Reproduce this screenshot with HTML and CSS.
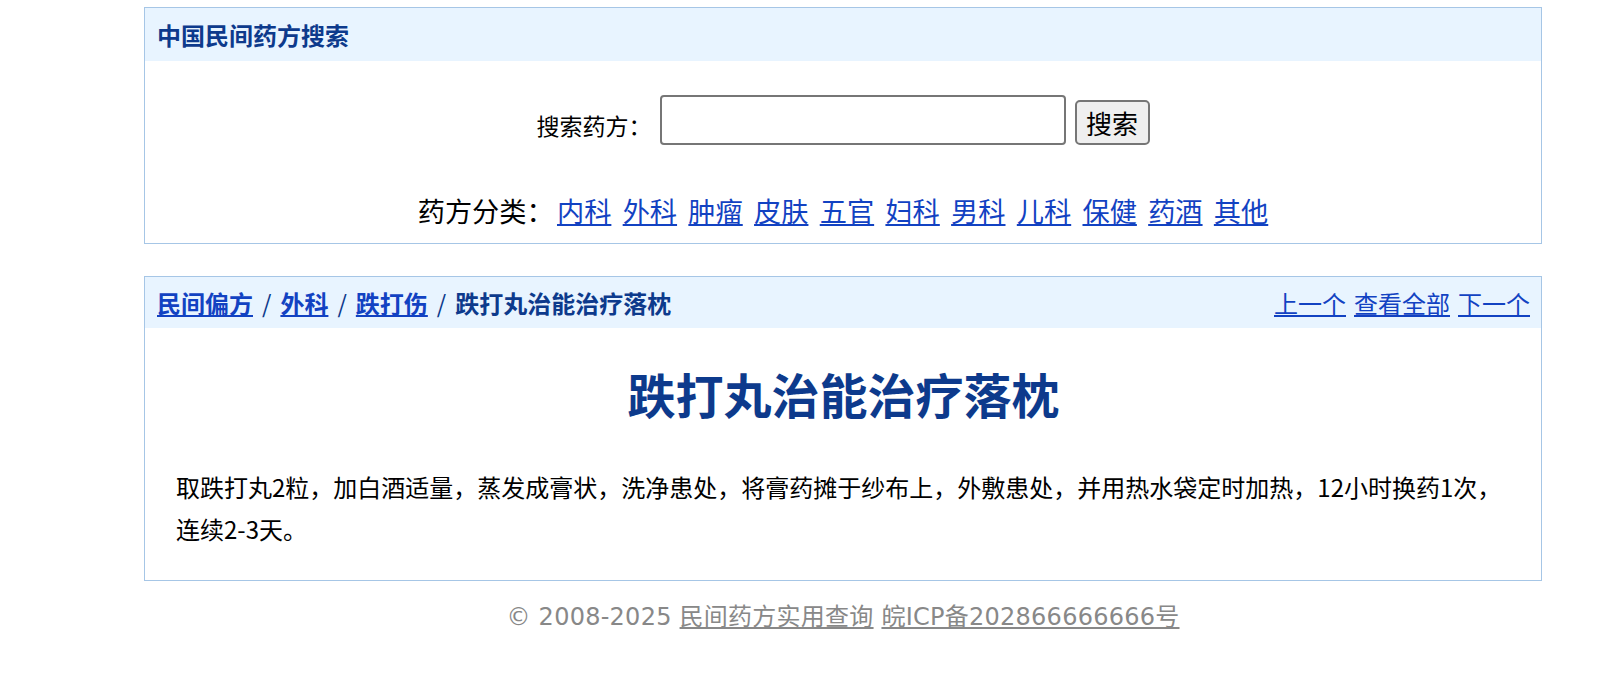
FILE: index.html
```html
<!DOCTYPE html>
<html lang="zh-CN">
<head>
<meta charset="utf-8">
<title>跌打丸治能治疗落枕</title>
<link rel="stylesheet" href="styles.css">
</head>
<body>
<div class="wrap">
  <div class="box box-search">
    <div class="box-head">中国民间药方搜索</div>
    <div class="search-body">
      <form class="search-row">
        <label class="search-label">搜索药方：</label>
        <input class="search-input" type="text">
        <button class="search-btn" type="button">搜索</button>
      </form>
      <div class="cat-row">
        <span class="cat-label">药方分类：</span>
        <a href="#">内科</a>
        <a href="#">外科</a>
        <a href="#">肿瘤</a>
        <a href="#">皮肤</a>
        <a href="#">五官</a>
        <a href="#">妇科</a>
        <a href="#">男科</a>
        <a href="#">儿科</a>
        <a href="#">保健</a>
        <a href="#">药酒</a>
        <a href="#">其他</a>
      </div>
    </div>
  </div>

  <div class="box box-article">
    <div class="box-head head-split">
      <div class="crumbs">
        <a href="#">民间偏方</a><span class="sep">/</span><a href="#">外科</a><span class="sep">/</span><a href="#">跌打伤</a><span class="sep">/</span><span class="cur">跌打丸治能治疗落枕</span>
      </div>
      <div class="pager">
        <a href="#">上一个</a>
        <a href="#">查看全部</a>
        <a href="#">下一个</a>
      </div>
    </div>
    <div class="article-body">
      <h1 class="article-title">跌打丸治能治疗落枕</h1>
      <p class="article-text">取跌打丸2粒，加白酒适量，蒸发成膏状，洗净患处，将膏药摊于纱布上，外敷患处，并用热水袋定时加热，12小时换药1次，连续2-3天。</p>
    </div>
  </div>

  <div class="footer">© 2008-2025 <a href="#">民间药方实用查询</a> <a href="#">皖ICP备202866666666号</a></div>
</div>
</body>
</html>
```

FILE: styles.css
```css
html, body {
  margin: 0;
  padding: 0;
  background: #ffffff;
}

body {
  font-family: "Noto Sans CJK SC", "Noto Sans", sans-serif;
  color: #000000;
}

.wrap {
  width: 1398px;
  margin: 0 0 0 144px;
  padding-top: 7px;
}

.box {
  border: 1px solid #a6c6e6;
  background: #ffffff;
}

.box-head {
  height: 53px;
  background: #e8f4ff;
  padding: 0 11px 0 12px;
  display: flex;
  align-items: center;
  font-size: 24px;
  font-weight: bold;
  color: #0d3a8c;
}

.search-body {
  padding-top: 34px;
  padding-bottom: 13px;
}

.search-row {
  display: flex;
  justify-content: center;
  align-items: flex-end;
  margin: 0;
}

.search-label {
  font-size: 23px;
  line-height: 23px;
  margin-bottom: 8px;
  margin-right: 8px;
}

.search-input {
  box-sizing: border-box;
  width: 406px;
  height: 50px;
  border: 2px solid #767676;
  border-radius: 4px;
  margin: 0 9px 0 0;
  padding: 0 6px;
  font-size: 22px;
}

.search-btn {
  box-sizing: border-box;
  width: 75px;
  height: 45px;
  border: 2px solid #767676;
  border-radius: 5px;
  background: #efefef;
  font-family: "Noto Sans CJK SC", sans-serif;
  font-size: 26px;
  line-height: 1;
  padding: 0;
  color: #000;
}

.cat-row {
  margin-top: 45px;
  display: flex;
  justify-content: center;
  align-items: baseline;
  gap: 11.3px;
  font-size: 27.2px;
  line-height: 40px;
}

.cat-label {
  margin-right: -8px;
}

.cat-row a,
.crumbs a,
.pager a {
  color: #1242c2;
  text-decoration: underline;
}

.box-article {
  margin-top: 32px;
}

.head-split {
  justify-content: space-between;
  height: 51px;
}

.crumbs .sep {
  color: #0d3a8c;
  margin: 0 9px;
  font-weight: normal;
}

.crumbs .cur {
  color: #0d3a8c;
}

.pager {
  font-weight: normal;
  display: flex;
  gap: 8px;
}

.article-body {
  padding: 34px 30px 30px 31px;
}

.article-title {
  margin: 0;
  text-align: center;
  font-size: 48px;
  line-height: 62px;
  font-weight: bold;
  color: #0d3a8c;
}

.article-text {
  margin: 42px 0 0 0;
  font-size: 24px;
  line-height: 42px;
}

.footer {
  margin-top: 18px;
  text-align: center;
  font-family: "DejaVu Sans", "Noto Sans CJK SC", sans-serif;
  font-size: 24px;
  line-height: 36px;
  letter-spacing: 0.25px;
  color: #888888;
}

.footer a {
  color: #888888;
  text-decoration: underline;
}
```
